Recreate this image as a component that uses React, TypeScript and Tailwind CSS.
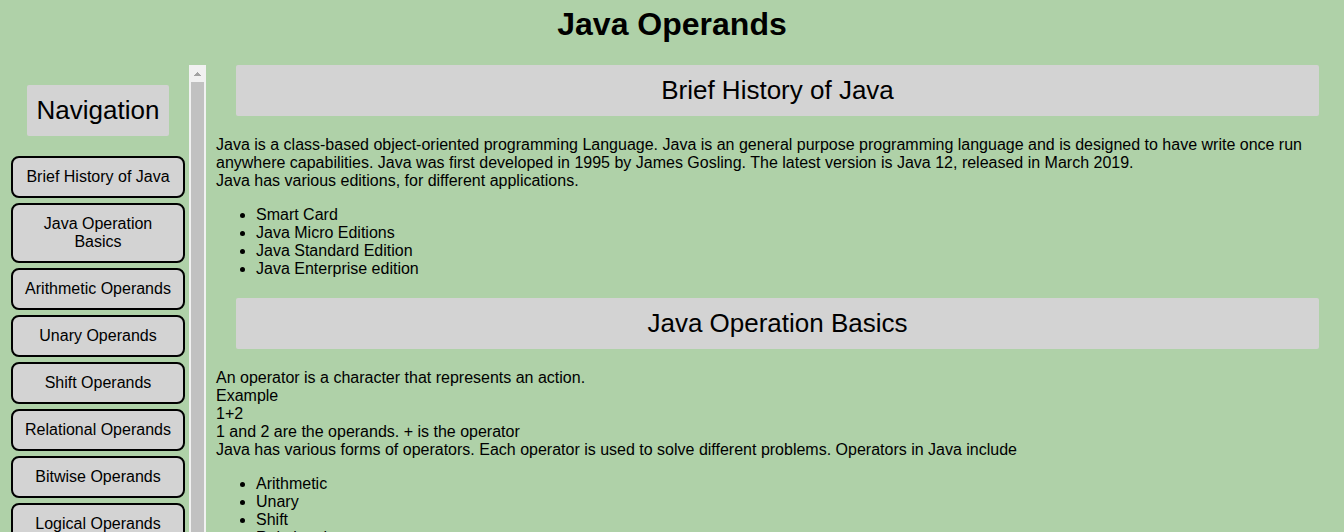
const navItems = [
  { label: "Brief History of Java", id: "history" },
  { label: "Java Operation Basics", id: "basics" },
  { label: "Arithmetic Operands", id: "arithmetic" },
  { label: "Unary Operands", id: "unary" },
  { label: "Shift Operands", id: "shift" },
  { label: "Relational Operands", id: "relational" },
  { label: "Bitwise Operands", id: "bitwise" },
  { label: "Logical Operands", id: "logical" },
];

const editions = [
  "Smart Card",
  "Java Micro Editions",
  "Java Standard Edition",
  "Java Enterprise edition",
];

const operatorKinds = ["Arithmetic", "Unary", "Shift", "Relational"];

function SectionTitle({ children }: { children: string }) {
  return (
    <h2 className="mx-5 rounded-xs bg-[#d3d3d3] p-2.5 text-center text-[26px] leading-[31px]">
      {children}
    </h2>
  );
}

function BulletList({ items }: { items: string[] }) {
  return (
    <ul className="my-4 list-disc pl-10">
      {items.map((item) => (
        <li key={item}>{item}</li>
      ))}
    </ul>
  );
}

function ScrollTrack() {
  return (
    <div aria-hidden="true" className="flex w-[17px] shrink-0 flex-col bg-[#f1f1f1]">
      <div className="flex h-[17px] shrink-0 items-center justify-center">
        <svg width="7" height="4" viewBox="0 0 7 4" shapeRendering="crispEdges">
          <path d="M3 0h1v1h1v1h1v1h1v1H0V3h1V2h1V1h1z" fill="#a3a3a3" />
        </svg>
      </div>
      <div className="mx-0.5 grow bg-[#c1c1c1]" />
    </div>
  );
}

export default function App() {
  return (
    <div className="flex h-screen flex-col overflow-hidden bg-[#afd1a8] font-['Liberation_Sans',Arial,sans-serif] text-base leading-[18px] text-black">
      <header className="pt-1.5 pb-[23px]">
        <h1 className="text-center text-[32px] leading-9 font-bold">Java Operands</h1>
      </header>
      <div className="flex min-h-0 grow">
        <aside className="flex w-[206px] shrink-0">
          <nav
            aria-label="Sections"
            className="flex min-w-0 grow flex-col gap-[5px] overflow-y-auto pt-5 pr-1 pl-[11px] [scrollbar-width:none]"
          >
            <h2 className="mb-[15px] shrink-0 self-center rounded-xs bg-[#d3d3d3] p-2.5 text-[26px] leading-[31px]">
              Navigation
            </h2>
            {navItems.map(({ label, id }) => (
              <a
                key={id}
                href={`#${id}`}
                className="shrink-0 rounded-lg border-2 border-black bg-[#d3d3d3] p-2.5 text-center"
              >
                {label}
              </a>
            ))}
          </nav>
          <ScrollTrack />
        </aside>
        <main className="min-w-0 grow overflow-y-auto pr-[5px] pl-2.5 [scrollbar-width:none]">
          <section id="history">
            <SectionTitle>Brief History of Java</SectionTitle>
            <p className="mt-5">
              Java is a class-based object-oriented programming Language. Java is an general purpose
              programming language and is designed to have write once run anywhere capabilities. Java was
              first developed in 1995 by James Gosling. The latest version is Java 12, released in March
              2019.
              <br />
              Java has various editions, for different applications.
            </p>
            <BulletList items={editions} />
          </section>
          <section id="basics" className="pt-1">
            <SectionTitle>Java Operation Basics</SectionTitle>
            <p className="mt-5">
              An operator is a character that represents an action.
              <br />
              Example
              <br />
              1+2
              <br />
              1 and 2 are the operands. + is the operator
              <br />
              Java has various forms of operators. Each operator is used to solve different problems.
              Operators in Java include
            </p>
            <BulletList items={operatorKinds} />
          </section>
        </main>
      </div>
    </div>
  );
}
